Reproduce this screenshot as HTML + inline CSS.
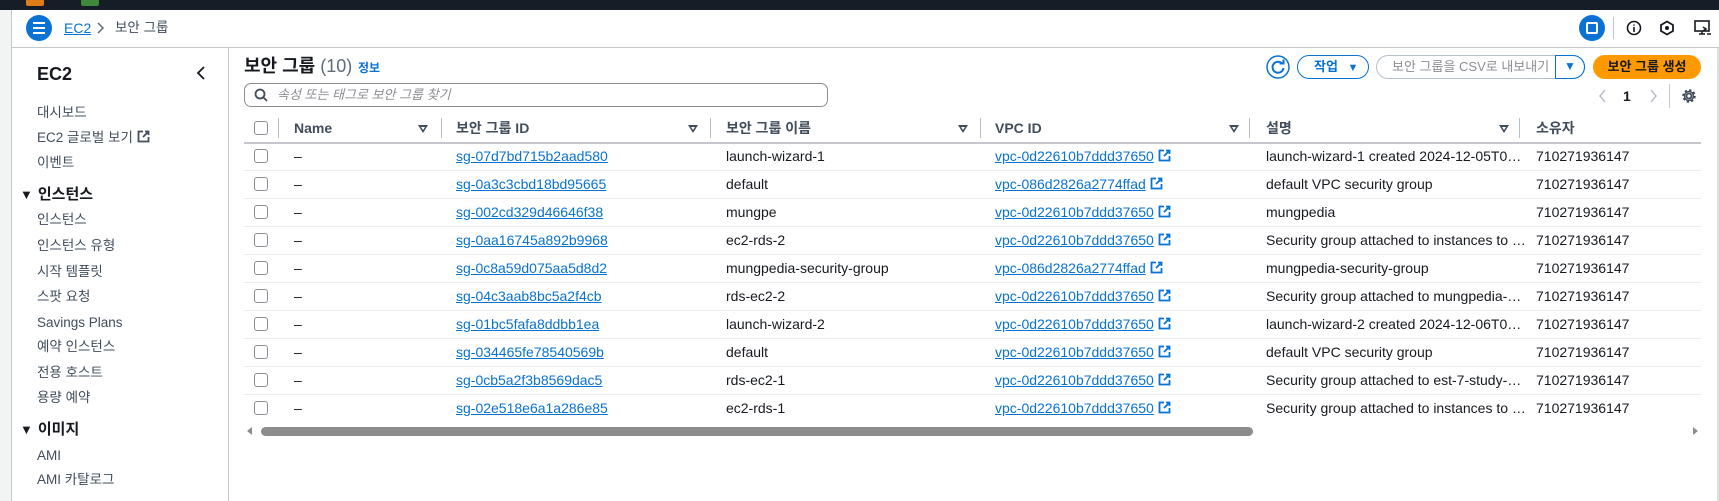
<!DOCTYPE html>
<html><head><meta charset="utf-8"><style>
*{box-sizing:border-box;margin:0;padding:0}
body{width:1719px;height:501px;overflow:hidden;background:#fff;font-family:"Liberation Sans","Noto Sans CJK KR",sans-serif;color:#16191f;font-size:14px;position:relative}
.a{position:absolute;white-space:nowrap;line-height:18px}
.lnk{color:#0972d3;text-decoration:underline}
.hd{font-weight:bold;color:#414d5c}
.cb{position:absolute;width:14px;height:14px;border:1.5px solid #8c8c94;border-radius:3px;background:#fff}
.sort{position:absolute;width:0;height:0;border-left:5px solid transparent;border-right:5px solid transparent;border-top:8px solid #414d5c}
.sort:after{content:"";position:absolute;left:-2px;top:-6px;border-left:2px solid transparent;border-right:2px solid transparent;border-top:3px solid #fff}
.div{position:absolute;width:1px;height:20px;background:#b6bec9}
.row{position:absolute;left:244px;width:1457px;height:1px;background:#e9ebed}
.nav{position:absolute;left:37px;font-size:13.5px;color:#414d5c;white-space:nowrap;line-height:18px}
.navh{position:absolute;left:20px;font-size:15px;font-weight:bold;white-space:nowrap;line-height:20px}
</style></head><body>
<div class="a" style="left:0;top:0;width:1719px;height:10px;background:#161d26"></div>
<div class="a" style="left:26px;top:0;width:18px;height:6px;background:#e07b1a;border-radius:0 0 2px 2px"></div>
<div class="a" style="left:81px;top:0;width:18px;height:6px;background:#3f8a3a;border-radius:0 0 2px 2px"></div>
<div class="a" style="left:0;top:10px;width:12px;height:491px;background:#f2f3f3;border-right:1px solid #c6c6cd"></div>
<div class="a" style="left:12px;top:47px;width:1707px;height:1px;background:#c6c6cd"></div>
<div class="a" style="left:26px;top:15px;width:26px;height:26px;border-radius:50%;background:#0972d3"></div>
<div class="a" style="left:33px;top:22px;width:12px;height:2px;background:#fff;box-shadow:0 5px 0 #fff,0 10px 0 #fff"></div>
<div class="a lnk" style="left:64px;top:19px;font-size:14px">EC2</div>
<svg class="a" style="left:96px;top:22px" width="10" height="12"><path d="M2 1l5 5-5 5" stroke="#5f6b7a" stroke-width="1.5" fill="none"/></svg>
<div class="a" style="left:115px;top:19px;font-size:13.5px;color:#414d5c">보안 그룹</div>
<div class="a" style="left:1579px;top:15px;width:26px;height:26px;border-radius:50%;background:#0972d3"></div>
<div class="a" style="left:1586px;top:22px;width:12px;height:12px;border:2px solid #fff;border-radius:2px"></div>
<div class="a" style="left:1613px;top:17px;width:1px;height:22px;background:#c6c6cd"></div>
<svg class="a" style="left:1626px;top:20px" width="16" height="16"><circle cx="8" cy="8" r="6.5" stroke="#16191f" stroke-width="1.6" fill="none"/><path d="M8 7v5M8 4.5v1.2" stroke="#16191f" stroke-width="1.6"/></svg>
<svg class="a" style="left:1659px;top:20px" width="16" height="16"><path d="M8 1.5l6 3.5v6l-6 3.5-6-3.5v-6z" stroke="#16191f" stroke-width="1.8" fill="none"/><circle cx="8" cy="8" r="2" fill="#16191f"/></svg>
<svg class="a" style="left:1694px;top:20px" width="18" height="16"><rect x="1" y="1" width="14" height="10" stroke="#16191f" stroke-width="1.6" fill="none"/><path d="M8 11v3M5 14h6M9 7l3 2-3 2M13 14h4" stroke="#16191f" stroke-width="1.5" fill="none"/></svg>
<div class="a" style="left:228px;top:48px;width:1px;height:453px;background:#c6c6cd"></div>
<div class="a" style="left:37px;top:63px;font-size:18px;font-weight:bold;line-height:22px">EC2</div>
<svg class="a" style="left:196px;top:66px" width="10" height="14"><path d="M8 1L2 7l6 6" stroke="#16191f" stroke-width="1.8" fill="none"/></svg>
<div class="nav" style="top:104px">대시보드</div>
<div class="nav" style="top:129px">EC2 글로벌 보기 <svg width="13" height="13" style="vertical-align:-1px"><path d="M6 1.5H1.5v10h10V7M8 1.5h3.5V5M11.5 1.5L6 7" stroke="#414d5c" stroke-width="1.8" fill="none"/></svg></div>
<div class="nav" style="top:154px">이벤트</div>
<div class="navh" style="top:185px"><span style="font-size:13px;margin-right:5px">▼</span>인스턴스</div>
<div class="nav" style="top:211px">인스턴스</div>
<div class="nav" style="top:237px">인스턴스 유형</div>
<div class="nav" style="top:263px">시작 템플릿</div>
<div class="nav" style="top:288px">스팟 요청</div>
<div class="nav" style="top:314px">Savings Plans</div>
<div class="nav" style="top:338px">예약 인스턴스</div>
<div class="nav" style="top:364px">전용 호스트</div>
<div class="nav" style="top:389px">용량 예약</div>
<div class="navh" style="top:420px"><span style="font-size:13px;margin-right:5px">▼</span>이미지</div>
<div class="nav" style="top:447px">AMI</div>
<div class="nav" style="top:471px">AMI 카탈로그</div>
<div class="a" style="left:244px;top:55px;font-size:18px;font-weight:bold;line-height:22px">보안 그룹 <span style="font-weight:normal;color:#5f6b7a">(10)</span></div>
<div class="a" style="left:358px;top:59px;font-size:12px;font-weight:bold;color:#0972d3">정보</div>
<div class="a" style="left:244px;top:83px;width:584px;height:24px;border:1px solid #8c8c94;border-radius:7px"></div>
<svg class="a" style="left:254px;top:88px" width="14" height="14"><circle cx="6" cy="6" r="4.5" stroke="#414d5c" stroke-width="1.8" fill="none"/><path d="M9.5 9.5l3.5 3.5" stroke="#414d5c" stroke-width="1.8"/></svg>
<div class="a" style="left:277px;top:86px;font-size:13px;color:#8c8c94;font-style:italic">속성 또는 태그로 보안 그룹 찾기</div>
<svg class="a" style="left:1266px;top:55px" width="24" height="24"><circle cx="12" cy="12" r="11" stroke="#0972d3" stroke-width="1.5" fill="#fff"/><path d="M16.5 9A5.5 5.5 0 1 0 17.5 13" stroke="#0972d3" stroke-width="2" fill="none"/><path d="M13.5 8.5h4v-4" stroke="#0972d3" stroke-width="2" fill="none"/></svg>
<div class="a" style="left:1297px;top:55px;width:72px;height:24px;border:1.5px solid #0972d3;border-radius:12px;color:#0972d3;font-weight:bold;font-size:13px;line-height:21px;padding-left:16px">작업 <span style="font-size:11px;margin-left:6px">▼</span></div>
<div class="a" style="left:1376px;top:55px;width:209px;height:24px;border:1.5px solid #b6bec9;border-right:1.5px solid #0972d3;border-radius:12px;font-size:13px;color:#8c8c94;line-height:21px;padding-left:15px">보안 그룹을 CSV로 내보내기</div>
<div class="a" style="left:1555px;top:55px;width:30px;height:24px;border:1.5px solid #0972d3;border-radius:0 12px 12px 0;color:#0972d3;font-size:12px;line-height:21px;text-align:center">▼</div>
<div class="a" style="left:1593px;top:55px;width:108px;height:24px;border-radius:12px;background:#ff9900;font-size:13px;font-weight:bold;line-height:24px;text-align:center">보안 그룹 생성</div>
<svg class="a" style="left:1598px;top:89px" width="10" height="14"><path d="M7 1L2 7l5 6" stroke="#b6bec9" stroke-width="1.5" fill="none"/></svg>
<div class="a" style="left:1623px;top:87px;font-weight:bold">1</div>
<svg class="a" style="left:1648px;top:89px" width="10" height="14"><path d="M3 1l5 6-5 6" stroke="#b6bec9" stroke-width="1.5" fill="none"/></svg>
<div class="a" style="left:1669px;top:84px;width:1px;height:24px;background:#c6c6cd"></div>
<svg class="a" style="left:1681px;top:88px" width="16" height="16"><circle cx="8" cy="8" r="2.5" stroke="#414d5c" stroke-width="1.8" fill="none"/><circle cx="8" cy="8" r="5.5" stroke="#414d5c" stroke-width="2.5" fill="none" stroke-dasharray="2.2 2.1"/><circle cx="8" cy="8" r="4.5" stroke="#414d5c" stroke-width="1.5" fill="none"/></svg>
<div class="cb" style="left:254px;top:121px"></div>
<div class="div" style="left:278px;top:118px"></div>
<div class="a hd" style="left:294px;top:119px">Name</div><div class="sort" style="left:418px;top:125px"></div><div class="div" style="left:441px;top:118px"></div>
<div class="a hd" style="left:456px;top:119px">보안 그룹 ID</div><div class="sort" style="left:688px;top:125px"></div><div class="div" style="left:710px;top:118px"></div>
<div class="a hd" style="left:726px;top:119px">보안 그룹 이름</div><div class="sort" style="left:958px;top:125px"></div><div class="div" style="left:980px;top:118px"></div>
<div class="a hd" style="left:995px;top:119px">VPC ID</div><div class="sort" style="left:1229px;top:125px"></div><div class="div" style="left:1249px;top:118px"></div>
<div class="a hd" style="left:1266px;top:119px">설명</div><div class="sort" style="left:1499px;top:125px"></div><div class="div" style="left:1519px;top:118px"></div>
<div class="a hd" style="left:1536px;top:119px">소유자</div>
<div class="row" style="top:142px;height:2px;background:#c6c6cd"></div>
<div id="rows"></div>
<script>
var d=[["sg-07d7bd715b2aad580","launch-wizard-1","vpc-0d22610b7ddd37650","launch-wizard-1 created 2024-12-05T0…"],
["sg-0a3c3cbd18bd95665","default","vpc-086d2826a2774ffad","default VPC security group"],
["sg-002cd329d46646f38","mungpe","vpc-0d22610b7ddd37650","mungpedia"],
["sg-0aa16745a892b9968","ec2-rds-2","vpc-0d22610b7ddd37650","Security group attached to instances to …"],
["sg-0c8a59d075aa5d8d2","mungpedia-security-group","vpc-086d2826a2774ffad","mungpedia-security-group"],
["sg-04c3aab8bc5a2f4cb","rds-ec2-2","vpc-0d22610b7ddd37650","Security group attached to mungpedia-…"],
["sg-01bc5fafa8ddbb1ea","launch-wizard-2","vpc-0d22610b7ddd37650","launch-wizard-2 created 2024-12-06T0…"],
["sg-034465fe78540569b","default","vpc-0d22610b7ddd37650","default VPC security group"],
["sg-0cb5a2f3b8569dac5","rds-ec2-1","vpc-0d22610b7ddd37650","Security group attached to est-7-study-…"],
["sg-02e518e6a1a286e85","ec2-rds-1","vpc-0d22610b7ddd37650","Security group attached to instances to …"]];
var h="",ext='<svg width="13" height="13" style="vertical-align:-1px;margin-left:4px"><path d="M6 1.5H1.5v10h10V7M8 1.5h3.5V5M11.5 1.5L6 7" stroke="#0972d3" stroke-width="1.8" fill="none"/></svg>';
for(var i=0;i<10;i++){var c=156+i*28,t=c-9;
h+='<div class="cb" style="left:254px;top:'+(c-7)+'px"></div>';
h+='<div class="a" style="left:294px;top:'+t+'px">–</div>';
h+='<div class="a lnk" style="left:456px;top:'+t+'px">'+d[i][0]+'</div>';
h+='<div class="a" style="left:726px;top:'+t+'px">'+d[i][1]+'</div>';
h+='<div class="a" style="left:995px;top:'+t+'px"><span class="lnk">'+d[i][2]+'</span>'+ext+'</div>';
h+='<div class="a" style="left:1266px;top:'+t+'px">'+d[i][3]+'</div>';
h+='<div class="a" style="left:1536px;top:'+t+'px">710271936147</div>';
if(i<9)h+='<div class="row" style="top:'+(c+14)+'px"></div>';}
document.getElementById("rows").innerHTML=h;
</script>
<div class="a" style="left:247px;top:427px;width:0;height:0;border-top:4px solid transparent;border-bottom:4px solid transparent;border-right:5px solid #8c8c8c"></div>
<div class="a" style="left:261px;top:427px;width:992px;height:9px;border-radius:5px;background:#8c8c8c"></div>
<div class="a" style="left:1693px;top:427px;width:0;height:0;border-top:4px solid transparent;border-bottom:4px solid transparent;border-left:5px solid #8c8c8c"></div>
<div class="a" style="left:1717px;top:48px;width:2px;height:453px;background:#e0e0e0"></div>
</body></html>
